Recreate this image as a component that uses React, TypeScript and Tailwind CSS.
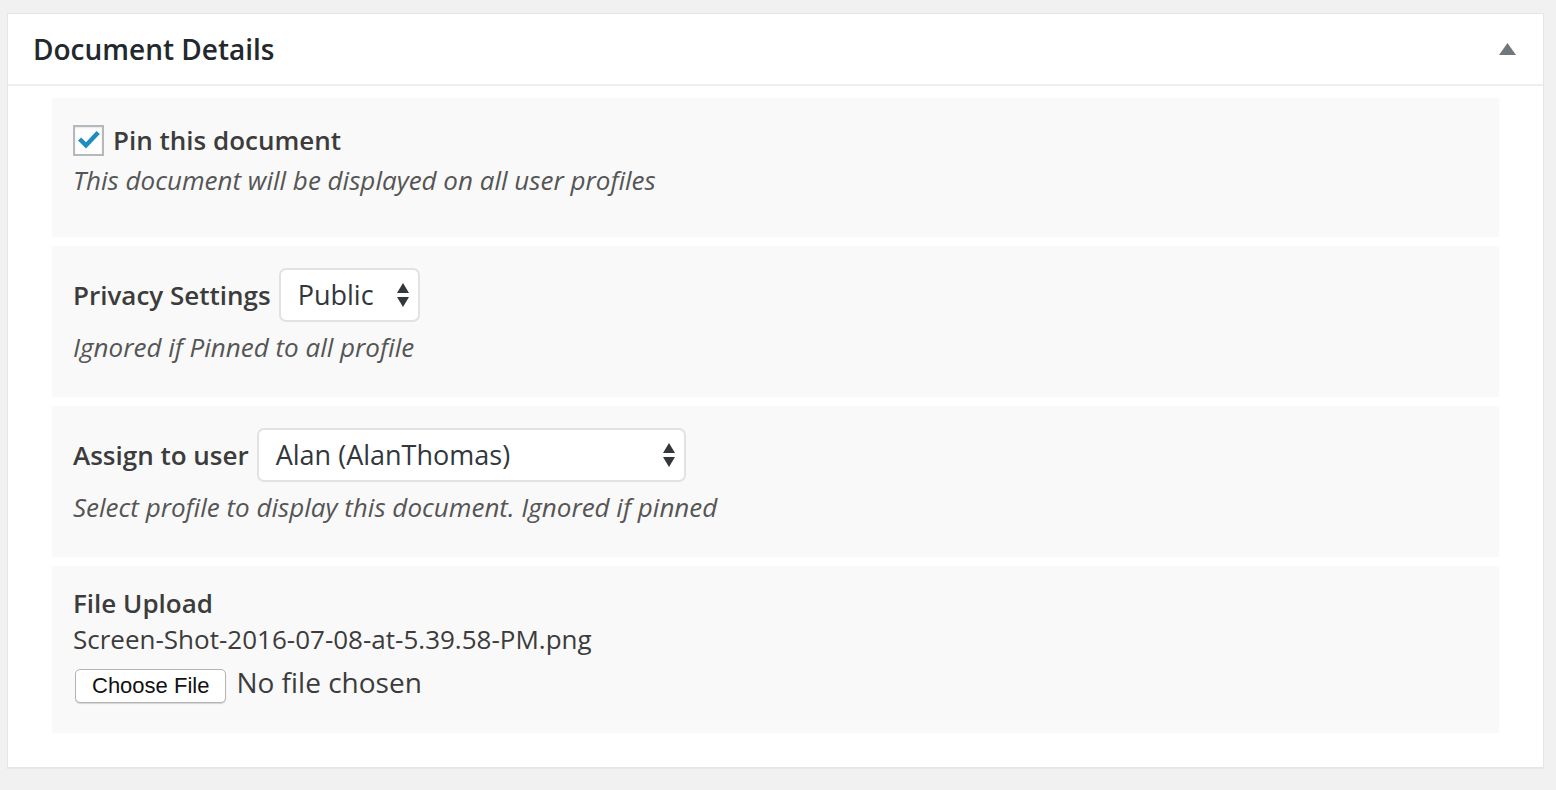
import React from "react";

const font = { fontFamily: '"Open Sans", "Noto Sans", sans-serif' };

const SelectArrows = () => (
  <svg width="14" height="26" viewBox="0 0 14 26" className="shrink-0">
    <path d="M7 1 L13 11 L1 11 Z" fill="#32373c" />
    <path d="M1 15 L13 15 L7 25 Z" fill="#32373c" />
  </svg>
);

const Section: React.FC<{ className?: string; children: React.ReactNode }> = ({ className, children }) => (
  <div className={`bg-[#f9f9f9] px-[21px] ${className ?? ""}`}>{children}</div>
);

export default function App() {
  return (
    <div className="min-h-[790px] w-full bg-[#f1f1f1] pl-[7px] pt-[13px]" style={font}>
      <div className="w-[1537px] border border-[#e5e5e5] bg-white shadow-[0_1px_1px_rgba(0,0,0,0.04)]">
        {/* header */}
        <div className="flex h-[72px] items-center justify-between border-b-2 border-[#eeeeee] pl-[25px] pr-[27px]">
          <h2 className="text-[28px] font-semibold text-[#23282d]">Document Details</h2>
          <svg width="17" height="13" viewBox="0 0 17 13">
            <path d="M8.5 0 L17 12 L0 12 Z" fill="#72777c" />
          </svg>
        </div>

        <div className="flex flex-col gap-[9px] px-[44px] pb-[34px] pt-[12px]">
          {/* pin */}
          <Section className="h-[139px] pt-[26px]">
            <label className="flex items-center gap-[9px]">
              <span className="flex h-[31px] w-[31px] items-center justify-center border-2 border-[#b4b9be] bg-[#fefefe] shadow-[inset_0_1px_2px_rgba(0,0,0,0.1)]">
                <svg width="26" height="22" viewBox="0 0 26 22">
                  <path d="M2 11.5 L5.2 8.4 L10 13.2 L20.5 2 L23.8 5 L10 19.5 Z" fill="#1e8cbe" />
                </svg>
              </span>
              <span className="text-[26px] font-semibold leading-[32px] text-[#3c3c3c]">Pin this document</span>
            </label>
            <p className="mt-[7px] text-[26px] italic leading-[34px] text-[#555]">
              This document will be displayed on all user profiles
            </p>
          </Section>

          {/* privacy */}
          <Section className="h-[151px] pt-[22px]">
            <div className="flex items-center gap-[8px]">
              <span className="text-[26px] font-semibold text-[#3c3c3c]">Privacy Settings</span>
              <div className="flex h-[54px] w-[141px] items-center justify-between rounded-[7px] border-2 border-[#e2e2e2] bg-white pl-[17px] pr-[8px]">
                <span className="text-[27px] text-[#32373c]">Public</span>
                <SelectArrows />
              </div>
            </div>
            <p className="mt-[7px] text-[26px] italic leading-[36px] text-[#555]">Ignored if Pinned to all profile</p>
          </Section>

          {/* assign */}
          <Section className="h-[151px] pt-[22px]">
            <div className="flex items-center gap-[8px]">
              <span className="text-[26px] font-semibold text-[#3c3c3c]">Assign to user</span>
              <div className="flex h-[54px] w-[429px] items-center justify-between rounded-[7px] border-2 border-[#e2e2e2] bg-white pl-[17px] pr-[8px]">
                <span className="text-[27px] text-[#32373c]">Alan (AlanThomas)</span>
                <SelectArrows />
              </div>
            </div>
            <p className="mt-[7px] text-[26px] italic leading-[36px] text-[#555]">
              Select profile to display this document. Ignored if pinned
            </p>
          </Section>

          {/* upload */}
          <Section className="h-[167px] pt-[19px]">
            <p className="text-[26px] font-semibold leading-[36px] text-[#3c3c3c]">File Upload</p>
            <p className="text-[26px] leading-[36px] text-[#3c3c3c]">Screen-Shot-2016-07-08-at-5.39.58-PM.png</p>
            <div className="mt-[12px] flex items-center gap-[10px] pl-[2px]">
              <button
                className="h-[34px] rounded-[5px] border border-[#b5b5b5] bg-white px-[16px] text-[22px] leading-none text-[#111] shadow-[0_1px_1px_rgba(0,0,0,0.15)]"
                style={{ fontFamily: '"Liberation Sans", Arial, sans-serif' }}
              >
                Choose File
              </button>
              <span className="-mt-[8px] text-[28px] text-[#3c3c3c]">No file chosen</span>
            </div>
          </Section>
        </div>
      </div>
    </div>
  );
}
